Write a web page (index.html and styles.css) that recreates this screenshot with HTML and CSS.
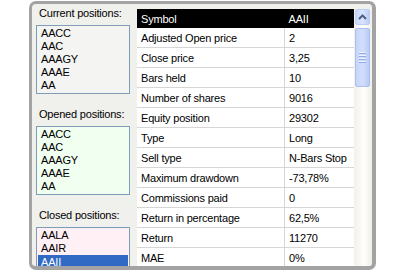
FILE: index.html
```html
<!DOCTYPE html>
<html>
<head>
<meta charset="utf-8">
<link rel="stylesheet" href="styles.css">
</head>
<body>
<div class="frame">
  <div class="left">
    <div class="label first">Current positions:</div>
    <ul class="list current">
      <li>AACC</li><li>AAC</li><li>AAAGY</li><li>AAAE</li><li>AA</li>
    </ul>
    <div class="label">Opened positions:</div>
    <ul class="list opened">
      <li>AACC</li><li>AAC</li><li>AAAGY</li><li>AAAE</li><li>AA</li>
    </ul>
    <div class="label">Closed positions:</div>
    <ul class="list closed">
      <li>AALA</li><li>AAIR</li><li class="sel">AAII</li>
    </ul>
  </div>
  <div class="grid">
    <table class="props">
      <thead>
        <tr><th>Symbol</th><th>AAII</th></tr>
      </thead>
      <tbody>
        <tr><td>Adjusted Open price</td><td>2</td></tr>
        <tr><td>Close price</td><td>3,25</td></tr>
        <tr><td>Bars held</td><td>10</td></tr>
        <tr><td>Number of shares</td><td>9016</td></tr>
        <tr><td>Equity position</td><td>29302</td></tr>
        <tr><td>Type</td><td>Long</td></tr>
        <tr><td>Sell type</td><td>N-Bars Stop</td></tr>
        <tr><td>Maximum drawdown</td><td>-73,78%</td></tr>
        <tr><td>Commissions paid</td><td>0</td></tr>
        <tr><td>Return in percentage</td><td>62,5%</td></tr>
        <tr><td>Return</td><td>11270</td></tr>
        <tr><td>MAE</td><td>0%</td></tr>
      </tbody>
    </table>
  </div>
  <div class="scrollbar">
    <div class="btn-up">
      <svg width="9" height="6" viewBox="0 0 9 6"><path d="M1 5 L4.5 1.5 L8 5" fill="none" stroke="#4d6185" stroke-width="2"/></svg>
    </div>
    <div class="thumb">
      <div class="grip"><span></span><span></span><span></span><span></span></div>
    </div>
  </div>
</div>
</body>
</html>
```

FILE: styles.css
```css
html, body {
  margin: 0;
  padding: 0;
  background: #ffffff;
}
body {
  font-family: "Liberation Sans", Arial, sans-serif;
  font-size: 11px;
  letter-spacing: -0.2px;
  color: #000;
}
.frame {
  margin: 1px 0 0 29px;
  width: 340px;
  height: 262px;
  border: 3px solid #a3a3a3;
  border-right-width: 4px;
  border-bottom-width: 4px;
  border-radius: 7px;
  background: #f0f0ec;
  display: flex;
  overflow: hidden;
}
.left {
  width: 94px;
  padding: 0 7px 0 4px;
  flex: none;
}
.label {
  height: 14px;
  line-height: 14px;
  padding-left: 3px;
  margin: 13px 0 5px 0;
  white-space: nowrap;
}
.label.first {
  margin-top: 2px;
}
.list {
  list-style: none;
  margin: 0;
  padding: 1px 1px;
  border: 1px solid #7f9db9;
}
.list li {
  height: 13px;
  line-height: 13px;
  padding-left: 3px;
}
.current { background: #f4f4f2; }
.opened { background: #f0fff0; }
.closed { background: #fff0f5; padding-bottom: 6px; }
.list li.sel {
  background: #316ac5;
  color: #fff;
  height: 14px;
  line-height: 14px;
}
.grid {
  width: 217px;
  flex: none;
  margin-top: 5px;
  background: #ffffff;
}
.props {
  border-collapse: collapse;
  width: 100%;
}
.props th {
  background: #000;
  color: #fff;
  font-weight: normal;
  text-align: left;
  height: 19px;
  padding: 0 0 0 4px;
}
.props td {
  height: 19px;
  padding: 0 0 0 4px;
  border-bottom: 1px solid #d6d6d6;
  white-space: nowrap;
}
.props td:first-child {
  width: 143px;
}
.props td + td {
  border-left: 1px solid #d6d6d6;
}
.scrollbar {
  width: 17px;
  flex: none;
  margin-top: 5px;
  background: linear-gradient(to right, #f3f1ec, #fefefb 60%, #f1efe8);
  display: flex;
  flex-direction: column;
  align-items: center;
}
.btn-up {
  width: 13px;
  height: 14px;
  margin-top: 0;
  border: 1px solid #b9cdf5;
  border-radius: 2px;
  background: linear-gradient(to right, #c7d6fb, #d9e4fd 50%, #bccdf7);
  display: flex;
  align-items: center;
  justify-content: center;
}
.thumb {
  width: 13px;
  height: 57px;
  margin-top: 3px;
  border: 1px solid #a9c0f2;
  border-radius: 2px;
  background: linear-gradient(to right, #c6d5fc, #d3def9 50%, #b9cbf5);
  display: flex;
  align-items: center;
  justify-content: center;
}
.grip {
  display: flex;
  flex-direction: column;
  gap: 1px;
}
.grip span {
  display: block;
  width: 7px;
  height: 1px;
  background: #eef3fe;
  border-bottom: 1px solid #8eaae8;
}
```
